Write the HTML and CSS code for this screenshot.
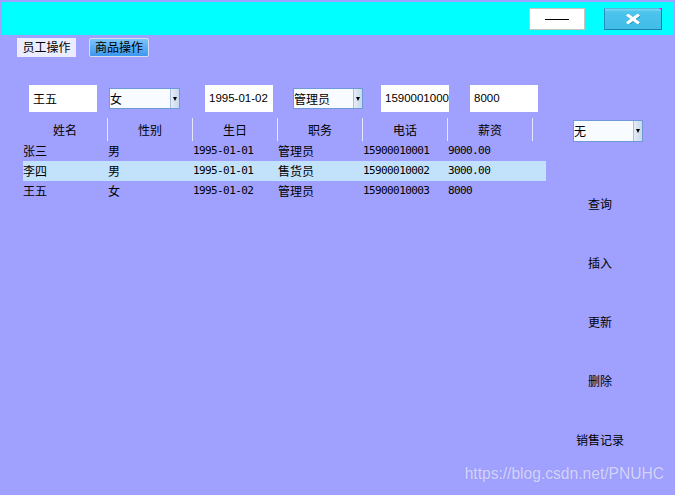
FILE: index.html
```html
<!DOCTYPE html>
<html lang="zh">
<head>
<meta charset="utf-8">
<title>员工管理</title>
<link rel="stylesheet" href="styles.css">
</head>
<body>
<div class="titlebar">
  <div class="btn-min"><span class="dash"></span></div>
  <div class="btn-close">
    <svg width="14" height="10" viewBox="0 0 14 10"><path d="M1 0.5 L13 9.5 M13 0.5 L1 9.5" stroke="#1c8ec0" stroke-width="3.4" transform="translate(0.6,0.6)"/><path d="M1 0.5 L13 9.5 M13 0.5 L1 9.5" stroke="#ffffff" stroke-width="3.2"/></svg>
  </div>
</div>
<div class="tabs">
  <span class="tab tab-active">员工操作</span>
  <span class="tab tab-btn">商品操作</span>
</div>
<div class="form">
  <div class="input f-name">王五</div>
  <div class="combo f-gender"><span class="combo-text">女</span><span class="arrow"></span></div>
  <div class="input num-input f-date">1995-01-02</div>
  <div class="combo f-role"><span class="combo-text">管理员</span><span class="arrow"></span></div>
  <div class="input num-input f-phone">1590001000</div>
  <div class="input num-input f-salary">8000</div>
</div>
<div class="main">
  <div class="table">
    <div class="thead">
      <div class="th">姓名</div>
      <div class="th">性别</div>
      <div class="th">生日</div>
      <div class="th">职务</div>
      <div class="th">电话</div>
      <div class="th">薪资</div>
    </div>
    <div class="tr">
      <div class="td">张三</div>
      <div class="td">男</div>
      <div class="td num">1995-01-01</div>
      <div class="td">管理员</div>
      <div class="td num">15900010001</div>
      <div class="td num">9000.00</div>
    </div>
    <div class="tr selected">
      <div class="td">李四</div>
      <div class="td">男</div>
      <div class="td num">1995-01-01</div>
      <div class="td">售货员</div>
      <div class="td num">15900010002</div>
      <div class="td num">3000.00</div>
    </div>
    <div class="tr">
      <div class="td">王五</div>
      <div class="td">女</div>
      <div class="td num">1995-01-02</div>
      <div class="td">管理员</div>
      <div class="td num">15900010003</div>
      <div class="td num">8000</div>
    </div>
  </div>
  <div class="side">
    <div class="combo side-combo"><span class="combo-text">无</span><span class="arrow"></span></div>
    <div class="actions">
      <div class="action">查询</div>
      <div class="action">插入</div>
      <div class="action">更新</div>
      <div class="action">删除</div>
      <div class="action">销售记录</div>
    </div>
  </div>
</div>
<div class="watermark">https://blog.csdn.net/PNUHC</div>
</body>
</html>
```
FILE: styles.css
```css
* { box-sizing: border-box; }
html, body { margin: 0; padding: 0; }
body {
  width: 675px;
  height: 495px;
  overflow: hidden;
  background: #a0a0ff;
  font-family: "Noto Sans CJK SC", "Liberation Sans", sans-serif;
  font-size: 12px;
  color: #000;
  position: relative;
}
.titlebar {
  margin: 2px 1px 0 2px;
  height: 33px;
  background: #00ffff;
  display: flex;
  justify-content: flex-end;
  align-items: flex-start;
  padding-top: 6px;
  padding-right: 12px;
}
.btn-min {
  width: 56px;
  height: 22px;
  background: #ffffff;
  border: 1px solid #c4c4c4;
  display: flex;
  align-items: center;
  justify-content: center;
}
.dash {
  display: block;
  width: 24px;
  height: 1px;
  background: #000;
}
.btn-close {
  position: relative;
  margin-left: 19px;
  width: 58px;
  height: 22px;
  background: linear-gradient(#7dd8f4 0, #4cc4ec 3px, #40bce8 100%);
  border: 1px solid #1a7fb0;
  border-top-color: #58b8e0;
  border-left-color: #2a90c0;
  display: flex;
  align-items: center;
  justify-content: center;
}
.btn-close::after {
  content: "";
  position: absolute;
  top: -1px;
  right: -1px;
  width: 0;
  height: 0;
  border-top: 3px solid #ff00ff;
  border-left: 3px solid transparent;
}
.tabs {
  display: flex;
  margin-top: 3px;
  padding-left: 17px;
}
.tab {
  height: 19px;
  line-height: 18px;
  text-align: center;
}
.tab-active {
  width: 59px;
  background: #ececff;
}
.tab-btn {
  margin-left: 13px;
  width: 60px;
  background: linear-gradient(#7cc4f8, #3c98ee);
  border: 1px solid #d8dcec;
  border-radius: 2px;
  line-height: 16px;
}
.form {
  display: flex;
  align-items: center;
  height: 27px;
  margin-top: 28px;
  padding-left: 29px;
}
.input {
  width: 68px;
  height: 27px;
  background: #ffffff;
  padding-left: 4px;
  line-height: 27px;
  white-space: nowrap;
  overflow: hidden;
}
.num-input {
  font-family: "Liberation Sans", sans-serif;
  font-size: 11.5px;
}
.f-date { margin-left: 25px; }
.f-phone { margin-left: 18px; }
.f-salary { margin-left: 21px; }
.combo {
  height: 21px;
  background: #f8fbff;
  border: 1px solid #6f9ad6;
  display: flex;
  align-items: stretch;
}
.combo-text {
  flex: 1;
  line-height: 19px;
  padding-left: 0;
  white-space: nowrap;
}
.arrow {
  width: 9px;
  background: linear-gradient(90deg, #e4ecf6, #c8d8ec);
  border-left: 1px solid #a8c0e0;
  position: relative;
}
.arrow::after {
  content: "";
  position: absolute;
  left: 2px;
  top: 8px;
  border-top: 4px solid #000;
  border-left: 2.5px solid transparent;
  border-right: 2.5px solid transparent;
}
.f-gender { width: 71px; margin-left: 12px; }
.f-role { width: 70px; margin-left: 20px; }
.main {
  display: flex;
  margin-top: 6px;
  padding-left: 23px;
}
.table { width: 523px; }
.thead { display: flex; height: 23px; }
.th {
  width: 85px;
  border-right: 1px solid #e6e6ff;
  text-align: center;
  line-height: 23px;
}
.tr { display: flex; height: 20px; }
.tr.selected { background: #c2e2fc; }
.td {
  width: 85px;
  line-height: 20px;
  white-space: nowrap;
}
.td.num {
  font-family: "DejaVu Sans Mono", "Liberation Mono", monospace;
  font-size: 11px;
  letter-spacing: -0.6px;
}
.side {
  margin-left: 14px;
  width: 80px;
}
.side-combo {
  margin-top: 2px;
  margin-left: 13px;
  width: 70px;
  height: 22px;
}
.side-combo .combo-text { line-height: 20px; }
.actions {
  margin-top: 32px;
}
.action {
  height: 59px;
  display: flex;
  align-items: center;
  justify-content: center;
}
.watermark {
  position: absolute;
  right: 11px;
  top: 465px;
  font-family: "Liberation Sans", sans-serif;
  font-size: 15.6px;
  color: rgba(235, 235, 255, 0.75);
  text-shadow: 0 0 1px rgba(120, 120, 200, 0.4);
}
```
